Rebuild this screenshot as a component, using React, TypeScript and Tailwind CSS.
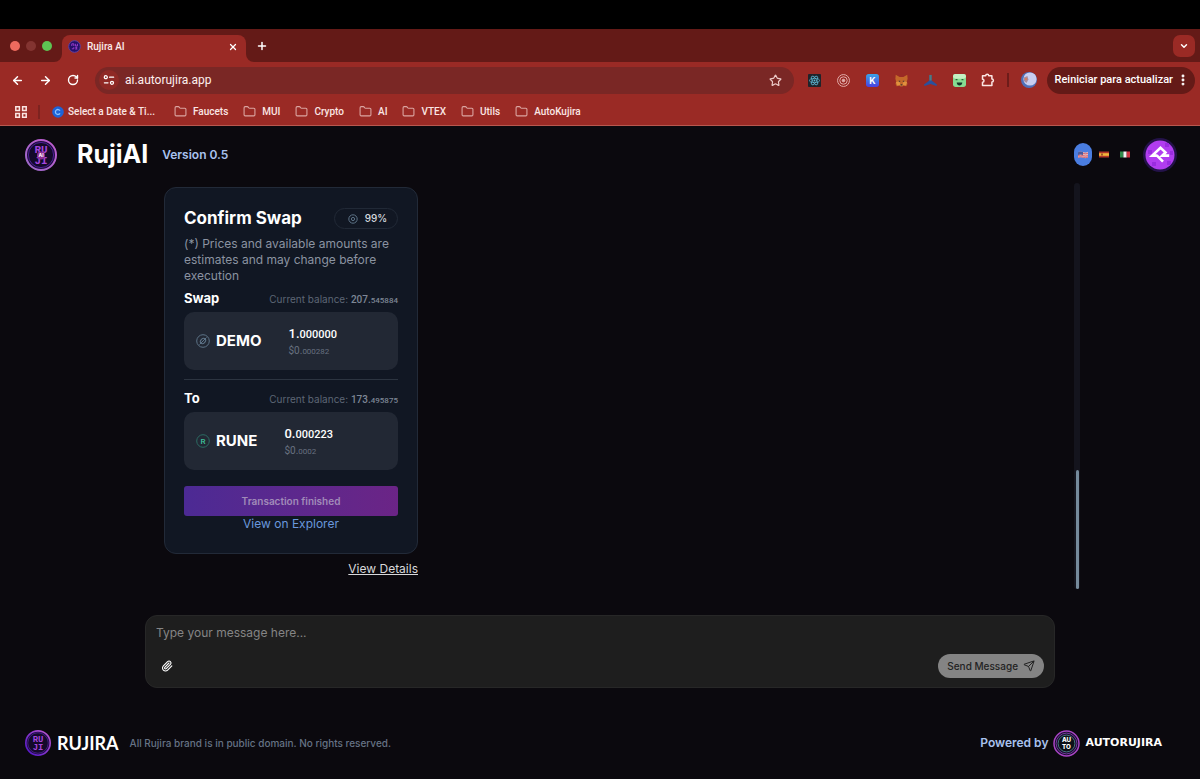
import React from "react";
import {
  ArrowLeft,
  ArrowRight,
  ChevronDown,
  EllipsisVertical,
  Folder,
  Paperclip,
  Plus,
  RotateCw,
  Send,
  Star,
  X,
} from "lucide-react";

function RujiMark({ className, ai = false }: { className: string; ai?: boolean }) {
  const id = ai ? "mark-ai" : "mark-plain";
  return (
    <svg viewBox="0 0 32 32" className={className} aria-hidden="true">
      <defs>
        <linearGradient id={id} x1="1" y1="0" x2="0" y2="1">
          <stop offset="0" stopColor="#c05ad0" />
          <stop offset="1" stopColor={ai ? "#9a6ac8" : "#4a10c8"} />
        </linearGradient>
      </defs>
      <circle cx="16" cy="16" r="15" fill="#1d0d3c" stroke={`url(#${id})`} strokeWidth="2" />
      <circle cx="16" cy="16" r="12.6" fill="#140a2a" stroke="#4c1d95" strokeWidth="1" />
      <g fill="#a445dd" fontFamily="Liberation Mono, monospace" fontWeight="700" fontSize="11" textAnchor="middle">
        <text x="16" y="14.4">RU</text>
        <text x="16" y="25">JI</text>
      </g>
      {ai && (
        <g>
          <circle cx="16" cy="16.5" r="4" fill="#8b2f93" />
          <text x="16" y="18.3" fill="#fff" fontFamily="Inter, sans-serif" fontWeight="700" fontSize="5" textAnchor="middle">
            AI
          </text>
        </g>
      )}
    </svg>
  );
}

function AutoMark() {
  return (
    <svg viewBox="0 0 27 27" className="size-[27px]" aria-hidden="true">
      <circle cx="13.5" cy="13.5" r="12.5" fill="#1a0d2c" stroke="#a844c4" strokeWidth="1.5" />
      <circle cx="13.5" cy="13.5" r="10.4" fill="none" stroke="#6d3a9a" strokeWidth="1" />
      <circle cx="13.5" cy="13.5" r="8.4" fill="#0d1118" stroke="#4a7f86" strokeWidth="0.9" />
      <g fill="#fff" fontFamily="Inter, sans-serif" fontWeight="800" fontSize="6.2" textAnchor="middle">
        <text x="13.5" y="12.4">AU</text>
        <text x="13.5" y="19.4">TO</text>
      </g>
    </svg>
  );
}

function TabStrip() {
  return (
    <div className="flex h-[33px] items-end bg-[#641a17] pr-[5px]">
      <div className="flex h-[33px] w-[62px] items-center gap-1.5 pl-2.5">
        <span className="size-2.5 rounded-full bg-[#ee6a5e]" />
        <span className="size-2.5 rounded-full bg-[#833431]" />
        <span className="size-2.5 rounded-full bg-[#5ec553]" />
      </div>
      <div className="relative flex h-[27px] w-[184px] items-center rounded-t-lg bg-[#9a2a25] pr-2 pb-1 pl-1.5">
        <svg viewBox="0 0 8 8" className="absolute bottom-0 -left-2 size-2" aria-hidden="true">
          <path d="M8 0A8 8 0 0 1 0 8H8Z" fill="#9a2a25" />
        </svg>
        <svg viewBox="0 0 8 8" className="absolute -right-2 bottom-0 size-2" aria-hidden="true">
          <path d="M0 0A8 8 0 0 0 8 8H0Z" fill="#9a2a25" />
        </svg>
        <svg viewBox="0 0 13 13" className="size-[13px]" aria-hidden="true">
          <circle cx="6.5" cy="6.5" r="5.8" fill="#25106a" stroke="#5940a8" strokeWidth="1" />
          <path d="M3.8 6V3.8h2V6M7.4 3.8V6h2V3.8M3.8 8.8h2V7.2M7.3 7.3h2M8.3 7.3v1.8M7.2 9h2.2" stroke="#a03fd0" strokeWidth="0.9" fill="none" />
        </svg>
        <span className="ml-1.5 flex-1 font-['Roboto',sans-serif] text-[10px] font-medium text-[#fbeae9]">Rujira AI</span>
        <button aria-label="Close tab">
          <X className="size-2.5 text-white" strokeWidth={3} />
        </button>
      </div>
      <button aria-label="New tab" className="ml-2.5 flex h-[33px] items-center">
        <Plus className="size-3 text-white" strokeWidth={3} />
      </button>
      <div className="flex h-[33px] flex-1 items-center justify-end">
        <button aria-label="Search tabs" className="flex size-[22px] items-center justify-center rounded-[7px] bg-[#9a2a25]">
          <ChevronDown className="size-2.5 text-white" strokeWidth={3.5} />
        </button>
      </div>
    </div>
  );
}

const extensions: { name: string; icon: React.ReactNode }[] = [
  {
    name: "React tools",
    icon: (
      <svg viewBox="0 0 14 14" className="size-[13px]">
        <rect width="14" height="14" rx="1" fill="#20232a" />
        <g fill="none" stroke="#5cb8d4" strokeWidth="0.8">
          <ellipse cx="7" cy="7" rx="5.4" ry="2.2" />
          <ellipse cx="7" cy="7" rx="5.4" ry="2.2" transform="rotate(60 7 7)" />
          <ellipse cx="7" cy="7" rx="5.4" ry="2.2" transform="rotate(120 7 7)" />
        </g>
        <circle cx="7" cy="7" r="1" fill="#5cb8d4" />
      </svg>
    ),
  },
  {
    name: "Target",
    icon: (
      <svg viewBox="0 0 14 14" className="size-[13px]" fill="none" stroke="#e5b3b0">
        <circle cx="7" cy="7" r="6.4" />
        <circle cx="7" cy="7" r="4" />
        <circle cx="7" cy="7" r="1.4" fill="#e5b3b0" />
      </svg>
    ),
  },
  {
    name: "Keplr",
    icon: (
      <svg viewBox="0 0 14 14" className="size-[13px]">
        <defs>
          <linearGradient id="ext-k" x1="0" y1="0" x2="0" y2="1">
            <stop offset="0" stopColor="#3aa5e8" />
            <stop offset="1" stopColor="#4a3fe0" />
          </linearGradient>
        </defs>
        <rect width="14" height="14" rx="3" fill="url(#ext-k)" />
        <text x="7" y="10.5" fill="#fff" fontFamily="Inter, sans-serif" fontWeight="700" fontSize="9.5" textAnchor="middle">
          K
        </text>
      </svg>
    ),
  },
  {
    name: "Fox",
    icon: (
      <svg viewBox="0 0 14 14" className="size-[13px]">
        <path d="M.8.8 5 3.2h4L13.2.8l.4 4.4-.8 3 .6 2.6-1.2 2.4-3-.6L8 13.4H6l-1.2-.8-3 .6L.6 10.8l.6-2.6-.8-3Z" fill="#c4682a" />
        <path d="m1 9 3.6-1.4L6 12H8l1.4-4.4L13 9l-1.4 3.4-3-.6-.6 1H6l-.6-1-3 .6Z" fill="#e0913f" />
        <path d="M4 7.2h1.6v1.2H4zM8.4 7.2H10v1.2H8.4zM6 11h2v1.4H6z" fill="#40312f" />
      </svg>
    ),
  },
  {
    name: "Trident",
    icon: (
      <svg viewBox="0 0 14 14" className="size-[13px]">
        <path d="M5.8 1h2.4v6l5.8 4.2-.6 1.8L7 10.8.6 13 0 11.2 5.8 7Z" fill="#2a509c" />
        <path d="M5.8 1h2.4v6H5.8Z" fill="#4f7c80" />
      </svg>
    ),
  },
  {
    name: "Frog",
    icon: (
      <svg viewBox="0 0 14 14" className="size-[13px]">
        <rect width="14" height="14" rx="3" fill="#86dc91" />
        <rect width="14" height="5" rx="2.5" fill="#c4f0c2" />
        <path d="M2.8 5.4h2v1.4h-2zM9.2 5.4h2v1.4h-2z" fill="#286338" />
        <path d="M4 9.2h6c0 4.4-6 4.4-6 0Z" fill="#15352a" />
      </svg>
    ),
  },
  {
    name: "Extensions",
    icon: (
      <svg viewBox="0 0 14 14" className="size-[14px]" fill="none" stroke="#fbe6e4" strokeWidth="1.5" strokeLinejoin="round">
        <path d="M1.5 2.8h3.2a1.5 1.5 0 0 1 3 0h3.2V6a1.5 1.5 0 0 1 0 3v3.6H1.5V9.2a1.5 1.5 0 0 0 0-3Z" />
      </svg>
    ),
  },
];

function Toolbar() {
  return (
    <div className="flex h-9 items-center bg-[#9a2a25] pr-[5px] pl-[3px] font-['Roboto',sans-serif] text-white">
      <button aria-label="Back" className="flex w-7 justify-center">
        <ArrowLeft className="size-[13px]" strokeWidth={2.75} />
      </button>
      <button aria-label="Forward" className="flex w-7 justify-center">
        <ArrowRight className="size-[13px]" strokeWidth={2.75} />
      </button>
      <button aria-label="Reload" className="flex w-7 justify-center">
        <RotateCw className="size-3" strokeWidth={2.75} />
      </button>
      <div className="ml-2 flex h-[27px] flex-1 items-center rounded-full bg-[#7a2725] pr-3 pl-1">
        <button aria-label="Site information" className="flex size-5 items-center justify-center rounded-full bg-[#8f2925]">
          <svg viewBox="0 0 12 12" className="size-3" fill="none" stroke="#fff" strokeWidth="1.3" strokeLinecap="round">
            <circle cx="2.8" cy="3.2" r="1.5" />
            <path d="M6.6 3.2h4M1.4 8.8h3.6" />
            <circle cx="9" cy="8.8" r="1.5" />
          </svg>
        </button>
        <input
          aria-label="Address"
          defaultValue="ai.autorujira.app"
          className="ml-1.5 min-w-0 flex-1 bg-transparent text-xs text-[#fdefee] outline-none"
        />
        <button aria-label="Bookmark page">
          <Star className="size-[13px] text-[#eccac8]" strokeWidth={2.2} />
        </button>
      </div>
      <div className="ml-1.5 flex">
        {extensions.map((e) => (
          <button key={e.name} aria-label={e.name} className="flex w-[29px] items-center justify-center">
            {e.icon}
          </button>
        ))}
      </div>
      <span className="ml-1 h-3.5 w-0.5 bg-[#6d1c1a]" />
      <button aria-label="Profile" className="ml-3">
        <svg viewBox="0 0 16 16" className="size-4">
          <circle cx="8" cy="8" r="8" fill="#4f6fb8" />
          <circle cx="9" cy="7" r="6.6" fill="#c9cdf0" />
          <path d="M3 5.5 6.4 4l1 3.5L5.5 11 3 9Z" fill="#a98a9a" />
          <path d="M4 6h2v2H4z" fill="#d97a5c" />
        </svg>
      </button>
      <button className="ml-2.5 flex h-[27px] items-center gap-[3px] rounded-full bg-[#641a17] pr-[5px] pl-2 text-[11px] font-medium whitespace-nowrap">
        Reiniciar para actualizar
        <EllipsisVertical className="size-3.5" strokeWidth={3} />
      </button>
    </div>
  );
}

const folders = ["Faucets", "MUI", "Crypto", "AI", "VTEX", "Utils", "AutoKujira"];

function Bookmarks() {
  return (
    <nav className="flex h-7 items-center border-b border-[#b8584f] bg-[#9a2a25] pl-[15px] font-['Roboto',sans-serif] text-[10px] font-medium text-[#fbe6e4]">
      <button aria-label="All apps">
        <svg viewBox="0 0 12 12" className="size-3" fill="none" stroke="#fbe6e4" strokeWidth="1.5">
          <path d="M.8.8h3.6v3.6H.8zM7.6.8h3.6v3.6H7.6zM.8 7.6h3.6v3.6H.8zM7.6 7.6h3.6v3.6H7.6z" />
        </svg>
      </button>
      <span className="ml-[11px] h-3.5 w-0.5 bg-[#7d2320]" />
      <a href="#date" className="ml-3 flex items-center gap-1 whitespace-nowrap">
        <svg viewBox="0 0 12 12" className="size-3" aria-hidden="true">
          <circle cx="6" cy="6" r="5.8" fill="#1d63d8" />
          <path d="M8 4.6A2.5 2.5 0 1 0 8 7.4" fill="none" stroke="#8dc3ff" strokeWidth="1.3" />
        </svg>
        Select a Date &amp; Ti...
      </a>
      <div className="ml-[19px] flex gap-[15px]">
        {folders.map((f) => (
          <a key={f} href={`#${f}`} className="flex items-center gap-1.5">
            <Folder className="size-[13px] text-[#dba5a1]" strokeWidth={2} />
            {f}
          </a>
        ))}
      </div>
    </nav>
  );
}

function Header() {
  return (
    <header className="flex h-[57px] items-center pr-[23px] pl-[25px]">
      <RujiMark ai className="size-8" />
      <h1 className="ml-5 text-[25px] font-bold text-white">RujiAI</h1>
      <span className="ml-3.5 text-xs font-semibold text-[#a9c2ee]">Version 0.5</span>
      <div className="ml-auto flex items-center">
        <button aria-label="English" className="flex h-[23px] w-[18px] items-center justify-center rounded-full bg-[#4a7de0]">
          <svg viewBox="0 0 10 8" className="h-2 w-2.5">
            <path d="M0 1.2Q2.5 0 5 1t5-.2v5.8Q7.5 7.8 5 6.8T0 7Z" fill="#e6b7bd" />
            <path d="M5 2.3q2.5 1 5 0M0 4.6q2.5-1 5 0t5 0M0 6.2q2.5-1 5 0t5-.2" stroke="#cf5561" strokeWidth="0.8" fill="none" />
            <path d="M0 1.2Q2.5 0 5 1v3Q2.5 3 0 4Z" fill="#4a5a9c" />
          </svg>
        </button>
        <button aria-label="Español" className="ml-[7px]">
          <svg viewBox="0 0 10 7" className="h-[7px] w-2.5">
            <path d="M0 .5h10v6H0z" fill="#b3342a" />
            <path d="M0 2.2h10v2.6H0z" fill="#f0b63a" />
            <path d="M2 2.5h2v2H2z" fill="#a0562c" />
          </svg>
        </button>
        <button aria-label="Italiano" className="ml-[11px]">
          <svg viewBox="0 0 10 7" className="h-[7px] w-2.5">
            <path d="M0 .5h3.4v6H0z" fill="#2f8a4a" />
            <path d="M3.4.5h3.3v6H3.4z" fill="#f3f3f3" />
            <path d="M6.7.5H10v6H6.7z" fill="#cf3340" />
          </svg>
        </button>
        <button aria-label="Wallet" className="ml-[13px]">
          <svg viewBox="0 0 34 34" className="size-[34px]">
            <circle cx="17" cy="17" r="17" fill="#24124a" />
            <circle cx="17" cy="17" r="14.5" fill="#b13df0" />
            <path d="M5 12h4v4H5zM22 5h4v4h-4zM24 23h4v4h-4zM9 24h4v4H9zM27 13h3v4h-3z" fill="#9a2ce0" />
            <path
              d="M14.5 17.6H9.2L17.5 9.8l5 4.600-3.300 3.200H26.200M14 17.600l6 6"
              fill="none"
              stroke="#fff"
              strokeWidth="2.6"
            />
          </svg>
        </button>
      </div>
    </header>
  );
}

type TokenRowProps = {
  label: string;
  balance: [string, string];
  symbol: string;
  icon: React.ReactNode;
  amount: [string, string];
  usd: [string, string];
};

function TokenRow({ label, balance, symbol, icon, amount, usd }: TokenRowProps) {
  return (
    <section>
      <div className="flex h-4 items-center justify-between">
        <h3 className="text-[13px] font-bold text-white">{label}</h3>
        <p className="text-[10px] text-[#5d6675]">
          Current balance:{" "}
          <span className="font-['Roboto',sans-serif] font-medium text-[#7d8695]">
            {balance[0]}.<span className="text-[8px]">{balance[1]}</span>
          </span>
        </p>
      </div>
      <div className="mt-[5px] flex h-[58px] items-center rounded-[10px] bg-[#222834] pl-3">
        {icon}
        <strong className="ml-1.5 text-[15px] font-bold text-white">{symbol}</strong>
        <div className="ml-[27px] pt-1 font-['Roboto',sans-serif]">
          <p className="text-[13px] leading-4 font-medium text-white">
            {amount[0]}.<span className="text-[11px]">{amount[1]}</span>
          </p>
          <p className="text-[10px] leading-4 text-[#687180]">
            {usd[0]}.<span className="text-[8px]">{usd[1]}</span>
          </p>
        </div>
      </div>
    </section>
  );
}

function SwapCard() {
  return (
    <article className="w-[254px] rounded-xl border border-[#222a38] bg-[#111723] px-[19px] pt-5 pb-[21px]">
      <div className="flex h-[21px] items-center justify-between">
        <h2 className="text-[17px] font-bold text-white">Confirm Swap</h2>
        <button className="flex h-[21px] w-16 items-center justify-center gap-[7px] rounded-full border border-[#212936] pl-[3px] text-[10px] font-medium text-[#d5d9df]">
          <svg viewBox="0 0 10 10" className="size-2.5" fill="none" stroke="#5d7387" strokeWidth="1">
            <circle cx="5" cy="5" r="4.2" />
            <circle cx="5" cy="5" r="1.6" />
          </svg>
          99%
        </button>
      </div>
      <p className="mt-[7px] text-xs leading-4 text-[#8b93a1]">
        (*) Prices and available amounts are estimates and may change before execution
      </p>
      <div className="mt-[7px]">
        <TokenRow
          label="Swap"
          balance={["207", "545884"]}
          symbol="DEMO"
          amount={["1", "000000"]}
          usd={["$0", "000282"]}
          icon={
            <svg viewBox="0 0 14 14" className="size-3.5" fill="none" stroke="#5d7387">
              <circle cx="7" cy="7" r="6.3" />
              <ellipse cx="7" cy="7" rx="3" ry="2.2" transform="rotate(-45 7 7)" />
              <path d="m3.5 10.5 7-7" />
            </svg>
          }
        />
      </div>
      <hr className="mt-[9px] border-[#2c3440]" />
      <div className="mt-[11px]">
        <TokenRow
          label="To"
          balance={["173", "495875"]}
          symbol="RUNE"
          amount={["0", "000223"]}
          usd={["$0", "0002"]}
          icon={
            <svg viewBox="0 0 14 14" className="size-3.5" fill="none" stroke="#2c6b63">
              <circle cx="7" cy="7" r="6.3" />
              <text x="7" y="9.8" fill="#3fc39c" stroke="none" fontFamily="Roboto, sans-serif" fontWeight="500" fontSize="8" textAnchor="middle">
                R
              </text>
            </svg>
          }
        />
      </div>
      <button
        disabled
        className="mt-4 block h-[30px] w-full rounded-[3px] bg-linear-to-r from-[#4c2a94] to-[#6b2486] text-[10px] font-semibold text-[#a18bb9]"
      >
        Transaction finished
      </button>
      <a href="#explorer" className="block text-center text-xs leading-4 text-[#6a97dd]">
        View on Explorer
      </a>
    </article>
  );
}

function Composer() {
  return (
    <form className="mx-[25px] flex h-[73px] flex-col justify-between rounded-xl border border-[#272727] bg-[#1e1e1e] px-2.5 pt-[7px] pb-[9px]">
      <textarea
        aria-label="Message"
        rows={1}
        placeholder="Type your message here..."
        className="block h-5 resize-none bg-transparent text-xs leading-5 text-white outline-none placeholder:text-[#858585]"
      />
      <div className="flex items-center justify-between">
        <button type="button" aria-label="Attach file" className="ml-[5px]">
          <Paperclip className="size-3 text-white" strokeWidth={2.2} />
        </button>
        <button className="flex h-6 items-center gap-[5px] rounded-full bg-[#848484] px-[9px] text-[10px] font-medium text-[#222222]">
          Send Message
          <Send className="size-3" strokeWidth={2} />
        </button>
      </div>
    </form>
  );
}

function Footer() {
  return (
    <footer className="flex h-[72px] items-center pr-[38px] pl-[25px]">
      <RujiMark className="size-[26px]" />
      <span className="ml-1.5 font-['Lato',sans-serif] text-lg font-bold text-white">RUJIRA</span>
      <span className="ml-[11px] text-[10px] font-medium text-[#667385]">
        All Rujira brand is in public domain. No rights reserved.
      </span>
      <div className="ml-auto flex items-center">
        <span className="text-xs font-semibold text-[#a9c2ee]">Powered by</span>
        <span className="ml-[5px]">
          <AutoMark />
        </span>
        <span className="ml-[5px] font-['DejaVu_Sans',sans-serif] text-[11px] font-bold text-white">AUTORUJIRA</span>
      </div>
    </footer>
  );
}

export default function App() {
  return (
    <div className="flex min-h-screen flex-col bg-[#0b090e] font-['Inter',sans-serif]">
      <div className="h-[29px] bg-black" />
      <TabStrip />
      <Toolbar />
      <Bookmarks />
      <Header />
      <main className="mx-auto flex w-4/5 flex-1 flex-col">
        <div className="flex flex-1 justify-between">
          <div className="flex flex-col items-end pt-1 pl-11">
            <SwapCard />
            <a href="#details" className="mt-[7px] text-xs leading-4 text-[#d8d8da] underline">
              View Details
            </a>
          </div>
          <div className="flex w-1.5 flex-col items-center justify-end rounded-full bg-[#14141d]">
            <div className="h-[119px] w-[3px] rounded-full bg-[#758a9b]" />
          </div>
        </div>
        <div className="pt-[26px] pb-[19px]">
          <Composer />
        </div>
      </main>
      <Footer />
    </div>
  );
}
